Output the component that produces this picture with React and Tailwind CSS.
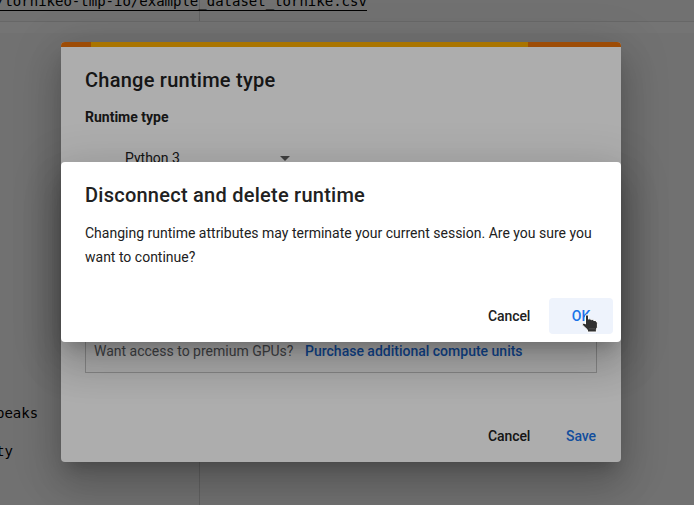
const dialogShadow =
  'shadow-[0_11px_15px_-7px_rgba(0,0,0,0.2),0_24px_38px_3px_rgba(0,0,0,0.14),0_9px_46px_8px_rgba(0,0,0,0.12)]';

function Notebook() {
  return (
    <div className="flex h-full flex-col bg-[#f7f7f7] font-['DejaVu_Sans_Mono',monospace] text-sm text-black">
      <div className="relative h-[22px] shrink-0 overflow-hidden border-b border-[#e0e0e0]">
        <div className="absolute top-0 left-[199px] h-full w-px bg-[#d5d5d5]" />
        <span className="relative -top-[8px] -ml-[4px] block h-[19px] w-[371px] border-b border-black leading-[19px] whitespace-nowrap">
          /tornikeo-tmp-io/example_dataset_tornike.csv
        </span>
      </div>
      <div className="h-[11px] shrink-0 bg-[#fdfdfd]" />
      <div className="flex min-h-0 grow pt-[20px]">
        <div className="flex w-[200px] shrink-0 flex-col border-r border-[#d5d5d5] pt-[351px] leading-[19px]">
          <span className="-ml-[4px]">peaks</span>
          <span className="mt-[19px] -ml-[4px]">ty</span>
        </div>
      </div>
    </div>
  );
}

function RuntimeDialog() {
  return (
    <section className={`mt-[42px] ml-[61px] flex h-[420px] w-[560px] flex-col overflow-hidden rounded-[4px] bg-white ${dialogShadow}`}>
      <div className="flex h-[5px] shrink-0 bg-[#e8710a]">
        <div className="ml-[30px] w-[437px] bg-[#f9ab00]" />
      </div>
      <div className="flex grow flex-col px-6">
        <h2 className="mt-[17px] text-xl leading-8 font-medium tracking-[0.25px]">Change runtime type</h2>
        <h3 className="mt-[9px] text-sm leading-6 font-bold">Runtime type</h3>
        <div className="mt-[17px] flex h-6 w-[205px] items-center justify-between pl-10 text-sm">
          <span>Python 3</span>
          <svg width="10" height="5" viewBox="0 0 10 5" fill="#606060">
            <path d="M0 0h10L5 5z" />
          </svg>
        </div>
        <div className="mt-[20px] flex h-[183px] items-end border border-[#c8c8c8] pb-[9px] pl-2 text-sm leading-6">
          <span className="w-[211px] whitespace-nowrap text-[#5f6368]">Want access to premium GPUs?</span>
          <span className="font-medium text-[#1967d2]">Purchase additional compute units</span>
        </div>
        <div className="mt-[45px] flex h-9 items-center justify-end text-sm font-medium tracking-[-0.1px]">
          <span className="w-[78px]">Cancel</span>
          <span className="w-[31px] text-[#1a73e8]">Save</span>
        </div>
      </div>
    </section>
  );
}

function HandCursor() {
  return (
    <svg className="absolute top-[15px] left-[32px]" width="18" height="20" viewBox="0 0 18 20">
      <path
        d="M4.5 3C4.5 1.3 7.5 1.3 7.5 3V6.2C8.6 5.5 9.8 5.9 10.2 6.8 11.2 6.2 12.4 6.6 12.8 7.5 14.4 7 16.4 8.4 16.4 10.4V14.2L15.4 16.2V19H6.4V16.8L1.6 12.2C.8 10.4 2.2 9.6 4.5 11Z"
        fill="#303030"
        stroke="#fff"
        strokeWidth="1"
        strokeLinejoin="round"
      />
      <path d="M7.8 15.8h6.2" stroke="#555" strokeWidth="0.8" />
    </svg>
  );
}

function ConfirmDialog() {
  return (
    <section className={`mt-[162px] ml-[61px] flex h-[180px] w-[560px] flex-col rounded-[4px] bg-white ${dialogShadow}`}>
      <h2 className="mt-[17px] px-6 text-xl leading-8 font-medium tracking-[0.25px]">Disconnect and delete runtime</h2>
      <p className="mt-[10px] px-6 text-sm leading-6">
        Changing runtime attributes may terminate your current session. Are you sure you want to continue?
      </p>
      <div className="mt-[29px] flex h-9 items-center justify-end pr-2 text-sm font-medium tracking-[-0.1px]">
        <span className="w-[61px]">Cancel</span>
        <button className="relative h-9 w-16 rounded-[4px] bg-[#eef3fc] text-[#1a73e8]">
          OK
          <HandCursor />
        </button>
      </div>
    </section>
  );
}

export default function App() {
  return (
    <main className="relative h-[505px] w-[694px] overflow-hidden font-['Roboto',sans-serif] text-[#212121]">
      <Notebook />
      <div className="absolute inset-0 flex items-start bg-black/32">
        <RuntimeDialog />
      </div>
      <div className="absolute inset-0 flex items-start bg-black/32">
        <ConfirmDialog />
      </div>
    </main>
  );
}
